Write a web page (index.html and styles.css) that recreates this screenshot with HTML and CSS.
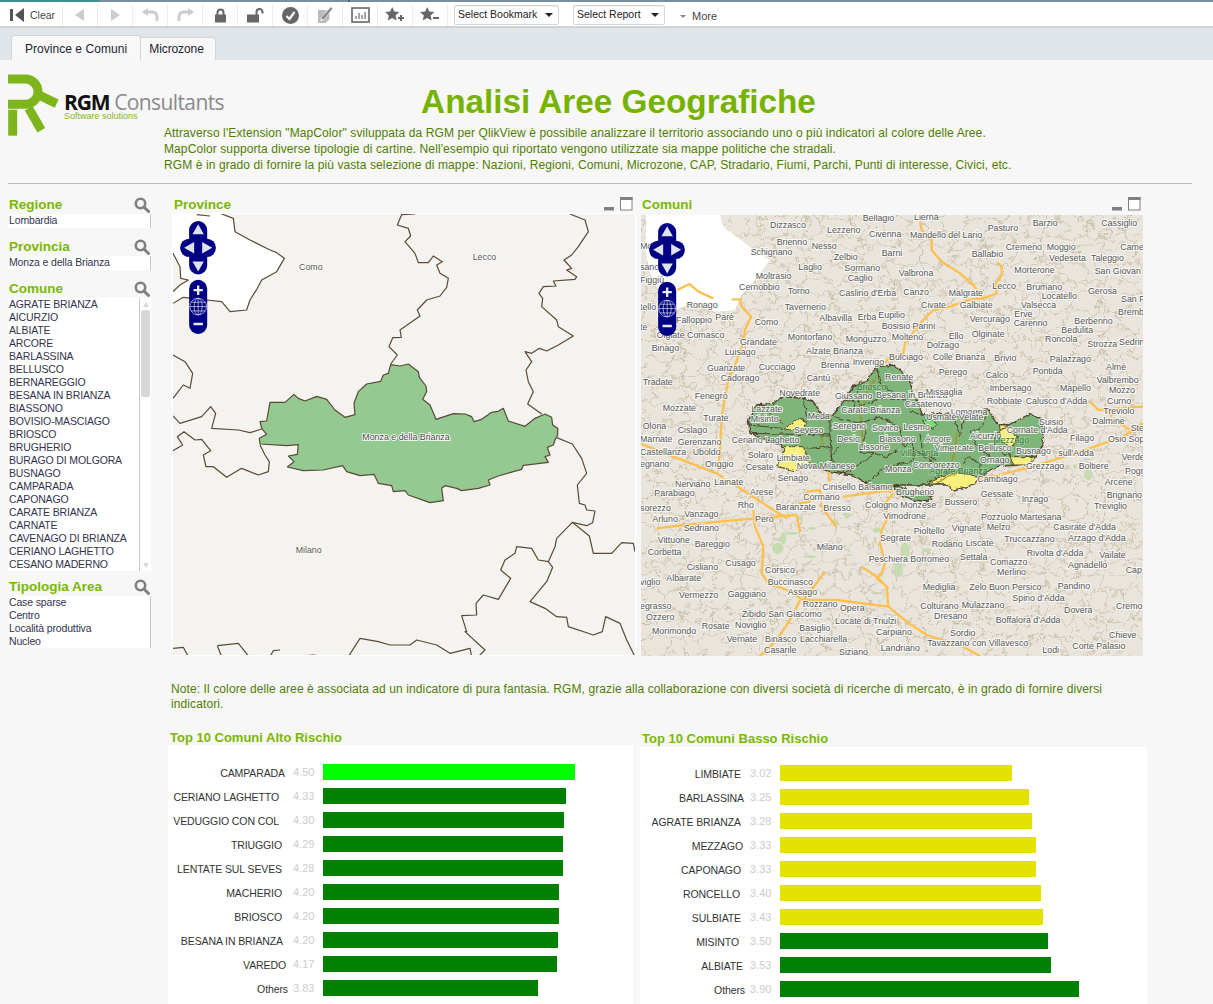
FILE: index.html
```html
<!DOCTYPE html>
<html lang="it">
<head>
<meta charset="utf-8">
<title>Analisi Aree Geografiche</title>
<link rel="stylesheet" href="styles.css">
</head>
<body>
<svg class="defs" width="0" height="0" aria-hidden="true">
  <defs>
    <symbol id="star" viewBox="0 0 20 20"><path d="M8 1l2.3 5.2 5.7.5-4.3 3.8 1.3 5.6L8 13.2l-5 2.9 1.3-5.6L0 6.700l5.700-.5z"/></symbol>
    <symbol id="search" viewBox="0 0 16 16"><circle cx="6.500" cy="6.500" r="4.700" fill="none" stroke="#808080" stroke-width="2.600"/><path d="M10 10l4.500 4.500" stroke="#808080" stroke-width="3" stroke-linecap="round"/></symbol>
    <symbol id="nav" viewBox="33 37 107 338">
      <rect x="60" y="37" width="54" height="160" rx="27" fill="#000085"/>
      <rect x="33" y="90" width="107" height="55" rx="27" fill="#000085"/>
      <path d="M87 47l17 30H70zM87 188L70 158h34zM45 117l30-17v34zM129 117L99 134v-34z" fill="#dfe3ee"/>
      <rect x="60" y="213" width="54" height="162" rx="27" fill="#000085"/>
      <path d="M87 230v28M73 244h28M73 345h28" stroke="#e8eaf4" stroke-width="7" fill="none"/>
      <g fill="none" stroke="#dfe3f2" stroke-width="2">
        <circle cx="87" cy="293" r="25" fill="#000085"/>
        <ellipse cx="87" cy="293" rx="12" ry="25"/>
        <path d="M87 268v50M62 293h50M66 280h42M66 306h42"/>
      </g>
    </symbol>
    <symbol id="win-min" viewBox="0 0 11 14"><rect x="0" y="10" width="10" height="3.500" fill="#808080"/></symbol>
    <symbol id="win-max" viewBox="0 0 13 14"><rect x=".5" y=".5" width="11.500" height="12.500" fill="#fff" stroke="#808080"/><rect x="0" y="0" width="12.500" height="3" fill="#808080"/></symbol>
    <filter id="wobble" x="0" y="0" width="100%" height="100%">
      <feTurbulence type="fractalNoise" baseFrequency="0.03" numOctaves="3" seed="7"/>
      <feDisplacementMap in="SourceGraphic" scale="70" xChannelSelector="R" yChannelSelector="G"/>
    </filter>
    <filter id="rough" x="-5%" y="-5%" width="110%" height="110%">
      <feTurbulence type="fractalNoise" baseFrequency="0.07" numOctaves="2" seed="3"/>
      <feDisplacementMap in="SourceGraphic" scale="14" xChannelSelector="R" yChannelSelector="G"/>
    </filter>
    <pattern id="cells" width="180" height="140" patternUnits="userSpaceOnUse">
      <path d="M0 28L40 14 88 34 128 10 180 28M40 14L34 0M128 10L134 0M88 34L80 74 40 84 0 70M40 84L46 140M80 74L128 88 180 74M128 88L124 140M128 10L144 50 128 88M0 28L14 70M46 106L88 116 124 106 180 116M0 110L46 106" fill="none" stroke="#c9bca4" stroke-width="3"/>
    </pattern>
  </defs>
</svg>

<div class="page">
  <div class="topstrip"></div>
  <nav class="toolbar">
    <div class="tool tool-clear">
      <svg width="15" height="14" viewBox="0 0 15 14"><rect x="0" y="1" width="3" height="12" fill="#555"/><path d="M14 0v14L5 7z" fill="#555"/></svg>
      <span>Clear</span>
    </div>
    <div class="tool"><svg width="14" height="14" viewBox="0 0 14 14"><path d="M11 1v12L2 7z" fill="#ccc"/></svg></div>
    <div class="tool"><svg width="14" height="14" viewBox="0 0 14 14"><path d="M3 1v12l9-6z" fill="#ccc"/></svg></div>
    <div class="tool"><svg width="17" height="14" viewBox="0 0 17 14"><path d="M4 4h6.500a4.500 4.500 0 0 1 4.500 4.500V13" fill="none" stroke="#ccc" stroke-width="3"/><path d="M6 0v8L0 4z" fill="#ccc"/></svg></div>
    <div class="tool"><svg width="17" height="14" viewBox="0 0 17 14"><path d="M13 4H6.500A4.500 4.500 0 0 0 2 8.500V13" fill="none" stroke="#ccc" stroke-width="3"/><path d="M11 0v8l6-4z" fill="#ccc"/></svg></div>
    <div class="tool"><svg width="13" height="15" viewBox="0 0 13 15"><path d="M3.500 7V4.500a3 3 0 0 1 6 0V7" fill="none" stroke="#666" stroke-width="2"/><rect x="1" y="6.500" width="11" height="8" fill="#666"/></svg></div>
    <div class="tool"><svg width="17" height="15" viewBox="0 0 17 15"><path d="M9.500 7V4a3 3 0 0 1 6 0v1.500" fill="none" stroke="#666" stroke-width="2"/><rect x="0" y="6.500" width="12" height="8" fill="#666"/></svg></div>
    <div class="tool"><svg width="17" height="17" viewBox="0 0 17 17"><circle cx="8.500" cy="8.500" r="8.500" fill="#666"/><path d="M4.500 9l3 3 5-7" fill="none" stroke="#fff" stroke-width="2.200"/></svg></div>
    <div class="tool"><svg width="15" height="16" viewBox="0 0 15 16"><path d="M0 3h9L3 11l-.5 3 3-1 6-7v6l-4 4H0z" fill="#bbb"/><path d="M4 10L13 0l1.500 1.500L6 12l-2.500.5z" fill="#888"/></svg></div>
    <div class="tool"><svg width="19" height="16" viewBox="0 0 19 16"><rect x="1" y="1" width="17" height="14" fill="#fff" stroke="#666" stroke-width="1.600"/><path d="M5 12V9M8 12V6M11 12V8M14 12V5" stroke="#888" stroke-width="1.500"/></svg></div>
    <div class="tool"><svg class="star" width="18" height="18"><use href="#star"/></svg><svg class="mark" width="6" height="6" viewBox="0 0 6 6"><path d="M3 0v6M0 3h6" stroke="#666" stroke-width="2"/></svg></div>
    <div class="tool"><svg class="star" width="18" height="18"><use href="#star"/></svg><svg class="mark" width="6" height="6" viewBox="0 0 6 6"><path d="M0 3h6" stroke="#666" stroke-width="2"/></svg></div>
    <div class="select select-bookmark"><span>Select Bookmark</span><i class="caret"></i></div>
    <div class="select select-report"><span>Select Report</span><i class="caret"></i></div>
    <div class="more"><i class="caret caret-grey"></i><span>More</span></div>
  </nav>

  <div class="tabs">
    <div class="tab tab-active">Province e Comuni</div>
    <div class="tab">Microzone</div>
  </div>

  <main class="content">
    <header class="head">
      <div class="logo">
        <svg class="logo-mark" width="52" height="64" viewBox="0 0 156 190">
          <g fill="none" stroke="#7fb51c" stroke-width="27">
            <path d="M0 14H52A38 38 0 0 1 52 90H0"/>
            <path d="M14 106V184"/>
            <path d="M84 58L146 88"/>
            <path d="M62 102L100 168"/>
          </g>
        </svg>
        <div class="logo-text">
          <div class="logo-name"><b>RGM</b> Consultants</div>
          <div class="logo-sub">Software solutions</div>
        </div>
      </div>
      <div class="intro">
        <h1>Analisi Aree Geografiche</h1>
        <p>Attraverso l'Extension "MapColor" sviluppata da RGM per QlikView è possibile analizzare il territorio associando uno o più indicatori al colore delle Aree.</p>
        <p>MapColor supporta diverse tipologie di cartine. Nell'esempio qui riportato vengono utilizzate sia mappe politiche che stradali.</p>
        <p>RGM è in grado di fornire la più vasta selezione di mappe: Nazioni, Regioni, Comuni, Microzone, CAP, Stradario, Fiumi, Parchi, Punti di interesse, Civici, etc.</p>
      </div>
    </header>
    <hr class="rule">

    <section class="dash">
      <aside class="side">
        <div class="filter">
          <div class="filter-head"><h2>Regione</h2><svg width="16" height="16"><use href="#search"/></svg></div>
          <ul class="listbox listbox-single"><li>Lombardia</li></ul>
        </div>
        <div class="filter">
          <div class="filter-head"><h2>Provincia</h2><svg width="16" height="16"><use href="#search"/></svg></div>
          <ul class="listbox listbox-single"><li>Monza e della Brianza</li></ul>
        </div>
        <div class="filter filter-comune">
          <div class="filter-head"><h2>Comune</h2><svg width="16" height="16"><use href="#search"/></svg></div>
          <div class="listbox listbox-scroll">
            <ul>
              <li>AGRATE BRIANZA</li><li>AICURZIO</li><li>ALBIATE</li><li>ARCORE</li><li>BARLASSINA</li><li>BELLUSCO</li><li>BERNAREGGIO</li><li>BESANA IN BRIANZA</li><li>BIASSONO</li><li>BOVISIO-MASCIAGO</li><li>BRIOSCO</li><li>BRUGHERIO</li><li>BURAGO DI MOLGORA</li><li>BUSNAGO</li><li>CAMPARADA</li><li>CAPONAGO</li><li>CARATE BRIANZA</li><li>CARNATE</li><li>CAVENAGO DI BRIANZA</li><li>CERIANO LAGHETTO</li><li>CESANO MADERNO</li>
            </ul>
            <div class="scrollbar"><i class="sb-up"></i><b class="sb-thumb"></b><i class="sb-down"></i></div>
          </div>
        </div>
        <div class="filter">
          <div class="filter-head"><h2>Tipologia Area</h2><svg width="16" height="16"><use href="#search"/></svg></div>
          <ul class="listbox"><li>Case sparse</li><li>Centro</li><li>Località produttiva</li><li>Nucleo</li></ul>
        </div>
      </aside>

      <section class="panel panel-prov">
        <div class="panel-head"><h2>Province</h2><svg class="wmin" width="11" height="14"><use href="#win-min"/></svg><svg class="wmax" width="13" height="14"><use href="#win-max"/></svg></div>
        <div class="map map-prov">
          <svg class="map-svg" width="462" height="441" viewBox="9 12 1386 1323">
            <rect x="9" y="12" width="1386" height="1330" fill="#f5f3ef"/>
            <path d="M9 12H155L190 25 195 65 240 90 300 120 320 128 343 145 320 185 275 210 262 235 240 270 230 300 180 305 155 275 110 270 40 262 9 280 9 245 30 225 55 210 32 205 30 170 9 130Z" fill="#fff"/>
            <g fill="none" stroke="#5a4a35" stroke-width="3.600" stroke-linejoin="round">
              <path d="M80 14L120 18M155 12L190 25 195 65 240 90 300 120 320 128 343 145 320 185 275 210 262 235 240 270 230 300 180 305 155 275 110 270 40 262 9 280"/>
              <path d="M9 130L30 170 32 205 55 210 30 225 9 245"/>
              <path d="M735 12L695 14 682 45 715 55 722 78 705 95 735 130 745 158 775 158 790 138 817 155 800 165 810 190 835 205 830 232 810 258 770 270 742 300 750 318 690 360 694 382 668 383 657 410 682 435 662 462"/>
              <path d="M1200 12L1245 30 1255 65 1225 110 1205 135 1182 150 1205 175 1190 180 1220 200 1215 208 1150 213 1158 228 1120 230 1107 250 1118 265 1115 290 1160 330 1165 350 1210 378 1165 405 1130 423 1108 415 1085 430 1065 425 1085 455 1068 480 1075 515 1090 545 1073 582 1115 612"/>
              <path d="M1160 683L1207 702 1235 745 1250 790 1222 825 1228 880 1245 885 1250 900 1275 903 1268 938 1250 947 1207 937 1160 985 1155 1010 1135 1055 1148 1072 1130 1115 1080 1175 1125 1195 1160 1220 1190 1222 1195 1250 1270 1275 1297 1265 1307 1220 1350 1240 1370 1290 1395 1340"/>
              <path d="M1207 937L1258 978 1270 1030 1325 1030 1355 998 1390 1000 1395 1025"/>
              <path d="M1135 1055L1105 1050 1085 1015 1040 1010 1035 1030 1005 1050 992 1080 1022 1105 985 1168 940 1155 918 1180 920 1215 875 1217 890 1265 885 1265 945 1320 925 1340"/>
              <path d="M9 435L45 455 68 490 60 535 40 525 9 565"/>
              <path d="M9 618L30 640 95 620 122 590 137 610 125 655 205 660 240 668 275 657"/>
              <path d="M9 722L38 705 22 680 42 665 75 690 95 688 122 722 100 735 108 770 130 770 170 802 215 775 265 795 295 785 298 755 285 735 270 705"/>
              <path d="M535 1340L570 1285 625 1295 660 1305 720 1305 740 1290 800 1305 840 1330 900 1315 905 1340"/>
              <path d="M9 1315L40 1312 55 1340M142 1307L205 1300 237 1340M155 1340L142 1307M300 1340L310 1322 330 1320M380 1340L430 1335 460 1340"/>
            </g>
            <path class="prov-area" d="M300 577H345L372 553 385 565 405 573 440 559 470 568 495 600 525 622 555 614 552 580 565 545 590 522 632 514 640 495 655 490 662 464 690 468 715 462 745 485 748 502 768 528 770 545 758 568 780 585 798 628 850 611 885 612 905 620 912 635 935 628 965 607 985 604 1000 595 1015 633 1065 649 1095 625 1125 612 1145 622 1148 645 1163 655 1163 675 1155 690 1150 705 1132 712 1140 735 1125 740 1135 757 1060 766 1055 778 985 798 955 810 960 825 925 835 875 842 860 835 825 827 815 835 820 872 780 878 715 855 705 842 670 845 665 827 625 820 612 793 570 797 530 785 518 767 460 780 400 782 352 771 372 755 355 738 382 733 385 704 350 707 270 702 268 685 290 673 275 655 270 635 290 633Z"/>
            <g class="prov-labels">
              <text x="387" y="181">Como</text>
              <text x="908" y="151">Lecco</text>
              <text class="prov-dark" x="577" y="690">Monza e della Brianza</text>
              <text x="377" y="1028">Milano</text>
            </g>
          </svg>
          <svg class="nav" width="36" height="113"><use href="#nav"/></svg>
        </div>
      </section>

      <section class="panel panel-com">
        <div class="panel-head"><h2>Comuni</h2><svg class="wmin" width="11" height="14"><use href="#win-min"/></svg><svg class="wmax" width="13" height="14"><use href="#win-max"/></svg></div>
        <div class="map map-com">
          <svg class="map-svg" width="502" height="441" viewBox="3 15 1506 1323">
            <rect x="3" y="15" width="1506" height="1323" fill="#e9e5dc"/>
            <rect x="3" y="15" width="1506" height="1323" fill="url(#cells)" filter="url(#wobble)"/>
            <path d="M18 15H240L250 50 330 110 390 150 345 210 300 262 285 300 225 305 150 280 110 300 50 325 60 240 30 190 18 130Z" fill="#fff"/>
            <g fill="#c6dcb0">
              <ellipse cx="413" cy="1015" rx="17" ry="17"/><ellipse cx="430" cy="985" rx="9" ry="18"/><ellipse cx="455" cy="970" rx="20" ry="5"/>
              <ellipse cx="795" cy="1025" rx="14" ry="28"/><ellipse cx="775" cy="1080" rx="14" ry="22"/><ellipse cx="710" cy="960" rx="12" ry="8"/>
              <ellipse cx="480" cy="923" rx="9" ry="6"/><ellipse cx="585" cy="935" rx="9" ry="7"/><ellipse cx="510" cy="1040" rx="20" ry="4"/><ellipse cx="1345" cy="795" rx="13" ry="16"/><ellipse cx="1305" cy="770" rx="6" ry="7"/><ellipse cx="860" cy="1020" rx="12" ry="6"/><ellipse cx="620" cy="915" rx="10" ry="6"/>
              <ellipse cx="610" cy="1008" rx="10" ry="4"/><ellipse cx="515" cy="955" rx="10" ry="4"/><ellipse cx="630" cy="1035" rx="5" ry="4"/><ellipse cx="700" cy="1148" rx="6" ry="4"/>
            </g>
            <g fill="none" stroke="#fdc04f" stroke-width="7" stroke-linejoin="round">
              <path d="M840 35L845 60 875 90 875 120 905 155 960 190 1000 225 1030 265"/>
              <path d="M1072 158L1085 170 1085 195 1065 225 1070 250 1030 265 985 270 930 290 880 300 850 330 830 355 795 400 790 430 745 445 735 460"/>
              <path d="M112 240L148 222 175 245 220 265"/>
              <path d="M275 268L300 268 305 290 333 320 315 360 310 395 295 440 265 510 255 560 245 620 240 720 235 780"/>
              <path d="M0 700L100 740 230 790 300 835 400 900 440 925M50 955L130 945 345 925 470 915M340 900L345 950 370 1010 365 1090 385 1120 440 1140 490 1170 590 1170 745 1190"/>
              <path d="M745 1190L800 1235 860 1275 970 1310 1020 1338M745 1190L740 1130 710 1105 725 1090 735 1060 720 1000 725 960 745 920 735 880 760 850M665 1070L710 1100 745 1135M555 1085L525 1125 490 1170M480 1170L450 1230 410 1290 360 1338"/>
              <path d="M610 860L720 845 760 842M470 915L480 965M540 880L570 925 590 950M565 780L570 830M1010 810L1160 775 1290 735 1450 680 1509 640M500 845L540 840 545 870M475 880L510 875 500 845M1350 575L1375 600 1509 590M1400 605L1460 655 1509 665"/>
            </g>
            <g transform="translate(300 420)">
              <g filter="url(#rough)">
                <path class="com-area" d="M410 50L465 45 510 90 520 130 548 195 600 190 650 195 690 185 745 180 770 220 805 225 870 192 900 205 910 240 905 290 890 320 830 345 770 350 720 380 700 405 640 420 625 405 565 405 460 405 575 440 560 455 520 450 470 430 465 405 420 420 380 400 340 375 270 365 210 345 195 320 130 290 30 250 25 210 50 165 100 160 130 140 190 145 220 155 250 200 280 195 310 150 345 105 380 95Z"/>
                <g class="com-yellow">
                  <path d="M130 290L190 290 210 345 165 362 110 350 130 315Z"/>
                  <path d="M135 235L175 205 200 215 190 235 150 240Z"/>
                  <path d="M565 395L640 365 720 380 700 405 640 420 625 405Z"/>
                  <path d="M775 225L805 225 830 260 820 290 785 280Z"/>
                  <path d="M810 320L885 320 860 345 820 345Z"/>
                </g>
                <path class="com-bright" d="M548 210L565 205 590 225 580 235 555 225Z"/>
                <path class="com-olive" d="M380 130L360 190 370 290M410 80L380 130M240 220L250 300M650 250L640 330M590 395L650 370"/>
                <path class="com-lines" d="M25 225L130 235M30 250L270 255M60 160L130 225M190 145L200 200 270 205 270 255 275 330M270 290L200 295M280 200L360 220 420 200 480 235 490 290 520 275 520 330M300 290L270 320 320 365 380 330 400 310 440 320 470 300M400 310L360 310 380 240M310 150L345 155 340 190M345 105L360 170 420 145 495 150 510 185 548 195M540 250L550 320 590 340 640 340 620 370M520 300L590 330M640 195L660 260 680 180M740 180L730 230 690 245 720 300 770 330M670 340L685 320 720 340 720 380M380 400L440 350 520 335M460 405L460 420M805 225L770 250 760 300 820 320M520 130L495 150M410 50L420 100 495 150"/>
              </g>
            </g>
            <g class="com-labels">
              <text x="668" y="34">Bellagio</text><text x="822" y="31">Lierna</text><text x="390" y="55">Dizzasco</text><text x="561" y="68">Lezzeno</text><text x="1043" y="62">Pasturo</text><text x="1178" y="47">Barzio</text><text x="1384" y="49">Cassiglio</text>
              <text x="687" y="80">Civenna</text><text x="810" y="83">Mandello del Lario</text><text x="410" y="106">Brienno</text><text x="515" y="117">Nesso</text><text x="332" y="134">Schignano</text><text x="581" y="149">Zelbio</text><text x="725" y="139">Barni</text><text x="995" y="141">Ballabio</text><text x="1097" y="120">Cremeno</text><text x="1220" y="121">Moggio</text><text x="1227" y="153">Vedeseta</text><text x="1353" y="152">Taleggio</text><text x="1441" y="119">Came</text>
              <text x="475" y="179">Laglio</text><text x="613" y="182">Sormano</text><text x="776" y="197">Valbrona</text><text x="1123" y="190">Morterone</text><text x="1364" y="191">San Giovan</text><text x="347" y="208">Moltrasio</text><text x="623" y="214">Caglio</text><text x="297" y="241">Cernobbio</text><text x="443" y="251">Torno</text><text x="597" y="259">Caslino d'Erba</text><text x="790" y="256">Canzo</text><text x="926" y="258">Malgrate</text><text x="1057" y="237">Lecco</text><text x="1159" y="240">Brumano</text><text x="1205" y="266">Locatello</text><text x="1344" y="253">Gerosa</text><text x="1443" y="275">San P</text>
              <text x="843" y="294">Civate</text><text x="959" y="293">Galbiate</text><text x="1143" y="294">Valsecca</text><text x="1434" y="314">Bremb</text><text x="140" y="293">Ronago</text><text x="108" y="339">Falloppio</text><text x="226" y="329">Parè</text><text x="344" y="345">Como</text><text x="434" y="301">Tavernerio</text><text x="538" y="334">Albavilla</text><text x="653" y="329">Erba</text><text x="715" y="324">Eupilio</text><text x="725" y="357">Bosisio Parini</text><text x="989" y="335">Vercurago</text><text x="1123" y="320">Erve</text><text x="1121" y="347">Carenno</text><text x="1303" y="341">Berbenno</text><text x="1264" y="368">Bedulita</text>
              <text x="50" y="384">Olgiate Comasco</text><text x="300" y="406">Grandate</text><text x="443" y="391">Montorfano</text><text x="617" y="396">Monguzzo</text><text x="755" y="391">Molteno</text><text x="926" y="386">Ello</text><text x="995" y="382">Olginate</text><text x="1215" y="396">Roncola</text><text x="1342" y="410">Strozza</text><text x="1437" y="405">Sedrin</text><text x="35" y="423">Binago</text><text x="254" y="434">Luisago</text><text x="498" y="431">Alzate Brianza</text><text x="860" y="415">Dolzago</text><text x="543" y="474">Brenna</text><text x="638" y="464">Inverigo</text><text x="747" y="449">Bulciago</text><text x="878" y="450">Colle Brianza</text><text x="1063" y="454">Brivio</text><text x="1229" y="455">Palazzago</text><text x="1398" y="479">Almè</text>
              <text x="201" y="483">Guanzate</text><text x="356" y="479">Cucciago</text><text x="242" y="514">Cadorago</text><text x="500" y="512">Cantù</text><text x="896" y="494">Perego</text><text x="1037" y="503">Calco</text><text x="1178" y="492">Pontida</text><text x="8" y="524">Tradate</text><text x="735" y="510">Renate</text><text x="1049" y="543">Imbersago</text><text x="1260" y="544">Mapello</text><text x="1370" y="520">Valbrembo</text><text class="in-green" x="650" y="539">Briosco</text><text x="418" y="558">Novedrate</text><text x="164" y="567">Fenegrò</text><text x="585" y="568">Giussano</text><text x="708" y="563">Besana in Brianza</text><text x="857" y="554">Missaglia</text><text x="1407" y="549">Mozzo</text><text x="1040" y="581">Robbiate</text><text x="1157" y="581">Calusco d'Adda</text><text x="1401" y="581">Curno</text><text x="794" y="590">Casatenovo</text><text x="68" y="604">Mozzate</text><text x="334" y="605">Lazzate</text><text x="604" y="610">Carate Brianza</text><text x="932" y="615">Lomagna</text><text x="1390" y="613">Treviolo</text><text x="190" y="633">Turate</text><text x="332" y="637">Misinto</text><text x="503" y="627">Meda</text><text x="858" y="631">Usmate Velate</text><text x="1197" y="644">Suisio</text><text x="1357" y="643">Dalmine</text><text x="8" y="656">Olona</text><text x="113" y="670">Cislago</text><text x="462" y="668">Seveso</text><text x="578" y="658">Seregno</text><text x="696" y="663">Sovico</text><text x="790" y="661">Lesmo</text><text x="1100" y="668">Cornate d'Adda</text><text x="1472" y="664">Ste</text><text x="0" y="695">Marnate</text><text x="990" y="686">Aicurzio</text>
              <text x="113" y="704">Gerenzano</text><text x="275" y="699">Ceriano Laghetto</text><text x="592" y="696">Desio</text><text x="718" y="696">Biassono</text><text x="855" y="696">Arcore</text><text class="in-green" x="1060" y="699">Mezzago</text><text x="1290" y="693">Filago</text><text x="1404" y="697">Osio Sopra</text><text x="0" y="734">Castellanza</text><text x="158" y="736">Uboldo</text><text x="323" y="743">Solaro</text><text x="410" y="754">Limbiate</text><text x="656" y="721">Lissone</text><text x="883" y="724">Vimercate</text><text x="1015" y="722">Bellusco</text><text x="1128" y="731">Busnago</text><text x="1255" y="737">sull'Adda</text><text x="1445" y="749">Verde</text><text x="0" y="771">egnano</text><text x="195" y="772">Origgio</text><text x="317" y="779">Cesate</text><text x="470" y="777">Nova Milanese</text><text x="735" y="785">Monza</text><text x="818" y="773">Concorezzo</text><text x="1020" y="760">Ornago</text><text x="1158" y="777">Grezzago</text><text x="1316" y="776">Boltiere</text><text x="1455" y="791">Pogn</text><text x="413" y="812">Senago</text><text class="in-green" x="868" y="792">Agrate Brianza</text><text x="1012" y="816">Cambiago</text><text class="in-green" x="780" y="737">Villasanta</text>
              <text x="105" y="831">Nerviano</text><text x="223" y="825">Lainate</text><text x="1394" y="826">Arcene</text><text x="43" y="859">Parabiago</text><text x="330" y="854">Arese</text><text x="547" y="841">Cinisello Balsamo</text><text x="768" y="855">Brugherio</text><text x="1022" y="861">Gessate</text><text x="1400" y="863">Brignano</text><text x="490" y="869">Cormano</text><text x="293" y="894">Rho</text><text x="407" y="900">Baranzate</text><text x="550" y="902">Bresso</text><text x="675" y="893">Cologno Monzese</text><text x="914" y="884">Bussero</text><text x="1145" y="876">Inzago</text><text x="1362" y="898">Treviglio</text><text x="0" y="904">sorezzo</text><text x="133" y="920">Vanzago</text><text x="730" y="926">Vimodrone</text><text x="1023" y="931">Pozzuolo Martesana</text><text x="37" y="937">Arluno</text><text x="345" y="936">Pero</text><text x="131" y="964">Sedriano</text><text x="1040" y="960">Melzo</text><text x="1240" y="960">Casirate d'Adda</text><text x="935" y="962">Vignate</text><text x="821" y="973">Pioltello</text><text x="53" y="998">Vittuone</text><text x="720" y="992">Segrate</text><text x="1093" y="997">Truccazzano</text><text x="1284" y="994">Arzago d'Adda</text><text x="23" y="1036">Corbetta</text><text x="164" y="1010">Bareggio</text><text x="530" y="1020">Milano</text><text x="875" y="1012">Rodano</text><text x="977" y="1007">Liscate</text><text x="1160" y="1037">Rivolta d'Adda</text><text x="1378" y="1044">Vailate</text><text x="960" y="1049">Settala</text><text x="1050" y="1065">Comazzo</text><text x="686" y="1055">Peschiera Borromeo</text><text x="140" y="1079">Cisliano</text><text x="256" y="1067">Cusago</text><text x="375" y="1090">Corsico</text><text x="1284" y="1074">Agnadello</text><text x="1071" y="1096">Merlino</text><text x="1457" y="1088">Cap</text><text x="79" y="1112">Albairate</text><text x="0" y="1126">viglio</text><text x="383" y="1125">Buccinasco</text><text x="848" y="1140">Mediglia</text><text x="988" y="1141">Zelo Buon Persico</text><text x="1253" y="1137">Pandino</text><text x="443" y="1156">Assago</text><text x="117" y="1164">Vermezzo</text><text x="263" y="1160">Gaggiano</text><text x="1117" y="1172">Spino d'Adda</text><text x="488" y="1190">Rozzano</text><text x="600" y="1202">Opera</text><text x="841" y="1197">Colturano</text><text x="965" y="1193">Mulazzano</text><text x="1272" y="1209">Dovera</text><text x="1428" y="1197">Cremo</text><text x="0" y="1197">egrasso</text><text x="305" y="1222">Zibido San Giacomo</text><text x="882" y="1226">Dresano</text><text x="18" y="1230">Ozzero</text><text x="585" y="1241">Locate di Triulzi</text><text x="1067" y="1240">Boffalora d'Adda</text><text x="185" y="1256">Rosate</text><text x="285" y="1253">Noviglio</text><text x="478" y="1263">Basiglio</text><text x="36" y="1272">Morimondo</text><text x="708" y="1274">Carpiano</text><text x="930" y="1277">Sordio</text><text x="1407" y="1283">Chieve</text><text x="260" y="1297">Vernate</text><text x="375" y="1296">Binasco</text><text x="480" y="1297">Lacchiarella</text><text x="862" y="1309">Tavazzano con Villavesco</text><text x="1297" y="1316">Corte Palasio</text><text x="372" y="1329">Casarile</text><text x="722" y="1323">Landriano</text><text x="597" y="1334">Siziano</text><text x="1207" y="1329">Lodi</text>
              <text x="0" y="117">Mo</text><text x="0" y="179">sanc</text><text x="0" y="219">Figgiù</text><text x="0" y="301">tello</text><text x="0" y="359">te</text>
            </g>
          </svg>
          <svg class="nav" width="36" height="113"><use href="#nav"/></svg>
        </div>
      </section>
    </section>

    <p class="note">Note: Il colore delle aree è associata ad un indicatore di pura fantasia. RGM, grazie alla collaborazione con diversi società di ricerche di mercato, è in grado di fornire diversi indicatori.</p>

    <section class="charts">
      <div class="chart chart-high">
        <h2>Top 10 Comuni Alto Rischio</h2>
        <div class="chart-body">
          <div class="row"><span class="label off-3">CAMPARADA</span><span class="val">4.50</span><div class="bar bar-lime" style="width:252px"></div></div>
          <div class="row"><span class="label off-9">CERIANO LAGHETTO</span><span class="val">4.33</span><div class="bar bar-green" style="width:243px"></div></div>
          <div class="row"><span class="label off-9">VEDUGGIO CON COL</span><span class="val">4.30</span><div class="bar bar-green" style="width:241px"></div></div>
          <div class="row"><span class="label off-6">TRIUGGIO</span><span class="val">4.29</span><div class="bar bar-green" style="width:240px"></div></div>
          <div class="row"><span class="label off-6">LENTATE SUL SEVES</span><span class="val">4.28</span><div class="bar bar-green" style="width:240px"></div></div>
          <div class="row"><span class="label off-6">MACHERIO</span><span class="val">4.20</span><div class="bar bar-green" style="width:236px"></div></div>
          <div class="row"><span class="label off-6">BRIOSCO</span><span class="val">4.20</span><div class="bar bar-green" style="width:236px"></div></div>
          <div class="row"><span class="label off-5">BESANA IN BRIANZA</span><span class="val">4.20</span><div class="bar bar-green" style="width:235px"></div></div>
          <div class="row"><span class="label off-2">VAREDO</span><span class="val">4.17</span><div class="bar bar-green" style="width:234px"></div></div>
          <div class="row"><span class="label">Others</span><span class="val">3.83</span><div class="bar bar-green" style="width:215px"></div></div>
        </div>
      </div>
      <div class="chart chart-low">
        <h2>Top 10 Comuni Basso Rischio</h2>
        <div class="chart-body">
          <div class="row"><span class="label off-4">LIMBIATE</span><span class="val">3.02</span><div class="bar bar-yellow" style="width:232px"></div></div>
          <div class="row"><span class="label off-1">BARLASSINA</span><span class="val">3.25</span><div class="bar bar-yellow" style="width:249px"></div></div>
          <div class="row"><span class="label off-4">AGRATE BRIANZA</span><span class="val">3.28</span><div class="bar bar-yellow" style="width:252px"></div></div>
          <div class="row"><span class="label off-2">MEZZAGO</span><span class="val">3.33</span><div class="bar bar-yellow" style="width:256px"></div></div>
          <div class="row"><span class="label off-4">CAPONAGO</span><span class="val">3.33</span><div class="bar bar-yellow" style="width:256px"></div></div>
          <div class="row"><span class="label off-5">RONCELLO</span><span class="val">3.40</span><div class="bar bar-yellow" style="width:261px"></div></div>
          <div class="row"><span class="label off-4">SULBIATE</span><span class="val">3.43</span><div class="bar bar-yellow" style="width:263px"></div></div>
          <div class="row"><span class="label off-6">MISINTO</span><span class="val">3.50</span><div class="bar bar-green" style="width:268px"></div></div>
          <div class="row"><span class="label off-2">ALBIATE</span><span class="val">3.53</span><div class="bar bar-green" style="width:271px"></div></div>
          <div class="row"><span class="label">Others</span><span class="val">3.90</span><div class="bar bar-green" style="width:299px"></div></div>
        </div>
      </div>
    </section>
  </main>
</div>
</body>
</html>
```
FILE: styles.css
```css
* { box-sizing: border-box; }
html, body { margin: 0; padding: 0; }
body { font-family: "Liberation Sans", Arial, sans-serif; background: #f7f7f7; color: #333; }
h1, h2, p, ul { margin: 0; padding: 0; }
ul { list-style: none; }
.defs { position: absolute; }
.page { width: 1213px; height: 1004px; overflow: hidden; }

.topstrip { height: 2px; background: linear-gradient(90deg, #3f8f95 0 100px, #7b8fa3 100px 348px, #2f6f78 348px 350px, #7b8fa3 350px); }

.toolbar { display: flex; align-items: center; height: 26px; padding-top: 2px; background: #fff; border-bottom: 2px solid #cfd3d5; font-size: 10.500px; }
.tool { position: relative; display: flex; align-items: center; justify-content: center; width: 35px; height: 22px; border-right: 1px solid #eee; }
.tool-clear { width: 63px; justify-content: flex-start; gap: 5px; padding-left: 10px; color: #444; }
.tool .star { fill: #666; margin-left: -2px; }
.tool .mark { position: absolute; left: 20px; top: 11px; }
.select { display: flex; align-items: center; justify-content: space-between; height: 20px; margin-top: -1px; padding: 0 5px 1px 3px; background: #fff; border: 1px solid #d5d8da; border-radius: 2px; color: #222; box-shadow: inset 0 1px 1px #eee; }
.select-bookmark { width: 105px; margin-left: 6px; }
.select-report { width: 92px; margin-left: 14px; }
.caret { display: block; width: 0; height: 0; border: 4px solid transparent; border-top: 4px solid #222; border-bottom: 0; margin-top: 2px; }
.caret-grey { border-top-color: #888; border-width: 3.500px; border-bottom: 0; }
.more { display: flex; align-items: center; gap: 6px; margin-left: 15px; font-size: 11px; color: #444; padding-top: 1px; }

.tabs { display: flex; align-items: flex-end; height: 32px; padding-left: 11px; background: #dfe5e8; }
.tab { display: flex; align-items: center; justify-content: center; height: 23px; width: 75px; padding-right: 3px; background: #f8f8f8; border: 1px solid #d2d6d8; border-bottom: 0; border-left: 0; border-radius: 0 4px 0 0; font-size: 12px; color: #223; letter-spacing: -.1px; }
.tab-active { height: 25px; width: 130px; padding: 1px 0 0; border-left: 1px solid #d2d6d8; border-radius: 4px 4px 0 0; letter-spacing: .05px; }

.content { display: block; }
.head { display: flex; height: 123px; padding-left: 8px; }
.logo { position: relative; width: 156px; padding-top: 14px; }
.logo-mark { display: block; }
.logo-text { position: absolute; left: 56px; top: 30px; white-space: nowrap; }
.logo-name { font-size: 21px; line-height: 24px; color: #8a8a8a; letter-spacing: -.6px; font-family: "Open Sans", "Liberation Sans", sans-serif; }
.logo-name b { color: #111; letter-spacing: -1.200px; }
.logo-sub { margin-top: -3px; font-size: 9px; line-height: 10px; color: #86b52a; }
.intro { width: 909px; padding-top: 22px; }
.intro h1 { height: 43px; font-size: 33.300px; line-height: 40px; font-weight: bold; color: #76b300; text-align: center; }
.intro p { font-size: 12px; line-height: 16px; letter-spacing: .1px; color: #4f7d00; white-space: nowrap; }
.rule { height: 1px; margin: 0 21px 0 8px; border: 0; background: #bbb; }

.dash { display: flex; height: 498px; padding: 12px 0 0 8px; }
h2 { font-size: 13.500px; line-height: 18px; font-weight: bold; color: #7ab800; }
.side { width: 143px; margin-right: 21px; }
.filter { margin-bottom: 10px; }
.filter-comune { margin-bottom: 7px; }
.filter-head { display: flex; align-items: center; justify-content: space-between; height: 18px; padding: 0 1px; }
.listbox { background: #fff; border-right: 1px solid #c8c8c8; font-size: 10.500px; line-height: 13px; letter-spacing: -.15px; color: #33334d; }
.listbox li { height: 13px; padding-left: 1px; white-space: nowrap; }
.listbox-single { height: 14px; }
.listbox-scroll { display: flex; height: 273px; justify-content: space-between; border-right: 0; }
.scrollbar { display: flex; flex-direction: column; align-items: center; width: 12px; border-left: 1px solid #c8c8c8; padding-top: 4px; }
.sb-up, .sb-down { display: block; width: 0; height: 0; border: 3px solid transparent; }
.sb-up { border-bottom: 5px solid #d8d8d8; border-top: 0; }
.sb-down { margin-top: auto; margin-bottom: 3px; border-top: 5px solid #d8d8d8; border-bottom: 0; }
.sb-thumb { display: block; width: 9px; height: 87px; margin-top: 3px; background: #d8d8d8; border-radius: 2px; }

.panel-prov { width: 464px; margin-right: 5px; }
.panel-com { width: 502px; }
.panel-head { display: flex; align-items: flex-start; height: 17px; padding-left: 2px; }
.panel-head h2 { margin-right: auto; }
.panel-head .wmin { margin-right: 5px; margin-top: 1px; }
.panel-head .wmax { margin-top: 1px; }
.panel-prov .panel-head .wmax { margin-right: 3px; }
.panel-com .panel-head { height: 19px; padding-left: 1px; }
.panel-com .panel-head .wmax { margin-right: 2px; }
.map { position: relative; overflow: hidden; }
.map-prov { height: 443px; border: 1px solid #fff; }
.map-com { height: 441px; }
.map-svg { display: block; font-family: "Liberation Sans", Arial, sans-serif; }
.nav { position: absolute; left: 8px; top: 8px; }
.map-prov .nav { left: 7px; top: 7px; }

.prov-area { fill: #94c992; stroke: #5a4a35; stroke-width: 3.600; stroke-linejoin: round; }
.prov-labels text { font-size: 26.500px; fill: #555; stroke: #fff; stroke-width: 3px; paint-order: stroke; }
.prov-labels .prov-dark { fill: #444; stroke-width: 5px; }
.com-area { fill: #7fb57a; stroke: #4f3f2b; stroke-width: 4; stroke-linejoin: round; }
.com-yellow path { fill: #f8f07c; stroke: #4f3f2b; stroke-width: 3; stroke-linejoin: round; }
.com-bright { fill: #74e072; stroke: #4f3f2b; stroke-width: 3; }
.com-olive { fill: none; stroke: #9a9a3a; stroke-width: 5; }
.com-lines { fill: none; stroke: #4f3f2b; stroke-width: 3; stroke-linejoin: round; }
.com-labels text { font-size: 26.500px; fill: #555; stroke: #fff; stroke-opacity: .8; stroke-width: 6px; paint-order: stroke; }
.com-labels .in-green { fill: #2e7d32; stroke-opacity: .25; }

.note { width: 950px; margin: 0 0 0 171px; font-size: 12px; line-height: 15px; letter-spacing: .1px; color: #4f7d00; }
.charts { display: flex; margin-top: 18px; padding-left: 168px; }
.chart h2 { height: 16px; line-height: 16px; font-size: 13px; padding-left: 2px; white-space: nowrap; }
.chart-high { width: 472px; }
.chart-low { width: 507px; margin-top: 1px; }
.chart-body { height: 260px; background: #fff; padding-top: 18px; width: 465px; }
.chart-low .chart-body { width: 507px; }
.row { display: flex; align-items: center; height: 16px; margin-bottom: 8px; font-size: 10.500px; letter-spacing: -.1px; }
.label { width: 120px; padding-top: 2px; text-align: right; color: #333; white-space: nowrap; }
.chart-low .label { width: 105px; }
.val { width: 35px; padding-left: 5px; font-size: 11px; letter-spacing: 0; color: #ccc; }
.bar { height: 16px; }
.bar-lime { background: #00ff00; }
.bar-green { background: #008000; }
.bar-yellow { background: #e2e200; }
.off-1 { padding-right: 1px; }
.off-2 { padding-right: 2px; }
.off-3 { padding-right: 3px; }
.off-4 { padding-right: 4px; }
.off-5 { padding-right: 5px; }
.off-6 { padding-right: 6px; }
.off-9 { padding-right: 9px; }
```
